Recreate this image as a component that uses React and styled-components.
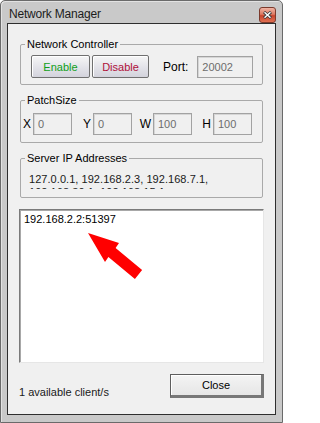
import React from "react";
import styled, { createGlobalStyle } from "styled-components";

const GlobalStyle = createGlobalStyle`
  html, body {
    margin: 0;
    padding: 0;
    background: #ffffff;
  }
  body {
    font-family: "Liberation Sans", Arial, sans-serif;
    font-size: 11px;
    color: #000;
  }
`;

const Window = styled.div`
  position: relative;
  box-sizing: border-box;
  width: 283px;
  height: 423px;
  display: flex;
  flex-direction: column;
  padding: 0 6px 7px 6px;
  background: #c9c9c9;
  border: 1px solid #6a6a6a;
  border-radius: 5px 5px 0 0;
  box-shadow: inset 1px 1px 0 #e2e2e2;
`;

const TitleBar = styled.div`
  height: 22px;
  display: flex;
  align-items: center;
  justify-content: space-between;
  padding: 0 0 0 2px;
`;

const Title = styled.span`
  font-size: 12px;
  color: #1c1c1c;
  letter-spacing: -0.2px;
  margin-top: 3px;
`;

const CloseX = styled.div`
  width: 17px;
  height: 16px;
  margin-top: 5px;
  box-sizing: border-box;
  border: 1px solid #7b3a2c;
  border-radius: 3px;
  background: linear-gradient(#f0b4a4 0%, #dc7a62 45%, #c8442c 55%, #e07052 100%);
  display: flex;
  align-items: center;
  justify-content: center;
`;

const Content = styled.div`
  flex: 1;
  display: flex;
  flex-direction: column;
  background: #f0f0f0;
  border: 1px solid #2e2e2e;
  padding: 0 11px 0 11px;
`;

const Group = styled.fieldset`
  margin: ${(p) => p.$top}px 1px 0 1px;
  padding: ${(p) => p.$pad};
  border: 1px solid #a9a9a9;
  border-radius: 2px;
  min-width: 0;
  & > :not(legend) {
    margin-left: ${(p) => p.$indent}px;
  }
`;

const Legend = styled.legend`
  padding: 0 2px;
  margin-left: 4px;
  line-height: 12px;
  font-size: 11px;
  color: #000;
`;

const Row = styled.div`
  display: flex;
  align-items: center;
`;

const Button = styled.button`
  box-sizing: border-box;
  width: ${(p) => p.$w}px;
  height: ${(p) => p.$h || 23}px;
  margin: 0;
  padding: 0;
  font-family: "Liberation Sans", Arial, sans-serif;
  font-size: 11px;
  color: ${(p) => p.$color || "#000"};
  background: linear-gradient(#f6f6f6 0%, #e4e4ea 50%, #d3d3dc 100%);
  border: 1px solid #707070;
  border-radius: 2px;
  box-shadow: inset 1px 1px 0 #ffffff;
  & + & {
    margin-left: 2px;
  }
`;

const DefaultButton = styled(Button)`
  background: linear-gradient(#f4f4f4, #e6e6e6);
  border: 1px solid #5e5e5e;
  border-right-width: 3px;
  border-bottom-width: 3px;
  border-right-color: #777;
  border-bottom-color: #777;
  border-radius: 0;
`;

const Label = styled.span`
  font-size: 11px;
  color: #000;
`;

const PortLabel = styled(Label)`
  margin: 0 9px 0 14px;
  font-size: 12px;
`;

const TextBox = styled.div`
  box-sizing: border-box;
  width: ${(p) => p.$w}px;
  height: 22px;
  display: flex;
  align-items: center;
  padding-left: 4px;
  font-size: 11px;
  color: #6d6d6d;
  background: #f0f0f0;
  border: 1px solid #a2a2a2;
  box-shadow: inset 1px 1px 0 #d6d6d6;
`;

const Fields = styled.div`
  display: flex;
  gap: 10px;
`;

const Field = styled.div`
  display: flex;
  align-items: center;
`;

const FieldLabel = styled.span`
  width: 9px;
  margin-right: 2px;
  display: flex;
  justify-content: flex-end;
  white-space: nowrap;
  font-size: 12px;
`;

const AddressBox = styled.div`
  height: 16px;
  overflow: hidden;
  line-height: 13px;
  font-size: 11px;
  color: #1a1a1a;
  letter-spacing: 0.05px;
`;

const ClientList = styled.div`
  box-sizing: border-box;
  height: 154px;
  margin: 11px 0 0 0;
  padding: 2px 4px;
  background: #ffffff;
  border: 1px solid;
  border-color: #7a7a7a #e6e6e6 #e6e6e6 #7a7a7a;
  box-shadow: inset 1px 1px 0 #a8a8a8;
  font-size: 11px;
  line-height: 14px;
  color: #000;
`;

const Footer = styled.div`
  display: flex;
  justify-content: space-between;
  align-items: flex-start;
  margin-top: 11px;
`;

const Status = styled.span`
  margin-top: 12px;
  line-height: 13px;
  font-size: 11px;
  color: #1a1a1a;
`;

const Overlay = styled.svg`
  position: absolute;
  left: -1px;
  top: -1px;
  pointer-events: none;
`;

const fields = [
  { name: "X", value: "0" },
  { name: "Y", value: "0" },
  { name: "W", value: "100" },
  { name: "H", value: "100" },
];

const addresses = [
  "127.0.0.1, 192.168.2.3, 192.168.7.1,",
  "192.168.30.1, 192.168.15.1",
];

export default function App() {
  return (
    <>
      <GlobalStyle />
      <Window>
        <TitleBar>
          <Title>Network Manager</Title>
          <CloseX>
            <svg width="9" height="8" viewBox="0 0 9 8">
              <path d="M1 1 L8 7 M8 1 L1 7" stroke="#3a3a3a" strokeWidth="3" />
              <path d="M1.5 1.2 L7.5 6.8 M7.5 1.2 L1.5 6.8" stroke="#ffffff" strokeWidth="1.4" />
            </svg>
          </CloseX>
        </TitleBar>
        <Content>
          <Group $top={14} $pad="5px 0 6px 0" $indent={10}>
            <Legend>Network Controller</Legend>
            <Row>
              <Button $w={59} $color="#10a018">Enable</Button>
              <Button $w={57} $color="#b0103a">Disable</Button>
              <PortLabel>Port:</PortLabel>
              <TextBox $w={56}>20002</TextBox>
            </Row>
          </Group>
          <Group $top={9} $pad="7px 0 7px 0" $indent={1}>
            <Legend>PatchSize</Legend>
            <Fields>
              {fields.map((f) => (
                <Field key={f.name}>
                  <FieldLabel>{f.name}</FieldLabel>
                  <TextBox $w={39}>{f.value}</TextBox>
                </Field>
              ))}
            </Fields>
          </Group>
          <Group $top={9} $pad="9px 0 8px 0" $indent={8}>
            <Legend>Server IP Addresses</Legend>
            <AddressBox>
              {addresses.map((a) => (
                <div key={a}>{a}</div>
              ))}
            </AddressBox>
          </Group>
          <ClientList>192.168.2.2:51397</ClientList>
          <Footer>
            <Status>1 available client/s</Status>
            <DefaultButton $w={94} $h={24}>Close</DefaultButton>
          </Footer>
        </Content>
        <Overlay width="283" height="423" viewBox="0 0 283 423">
          <polygon
            points="88,233 119,243 115.6,248.1 142.1,270.1 134.9,278.9 108.4,256.9 105,262"
            fill="#ff0000"
          />
        </Overlay>
      </Window>
    </>
  );
}
